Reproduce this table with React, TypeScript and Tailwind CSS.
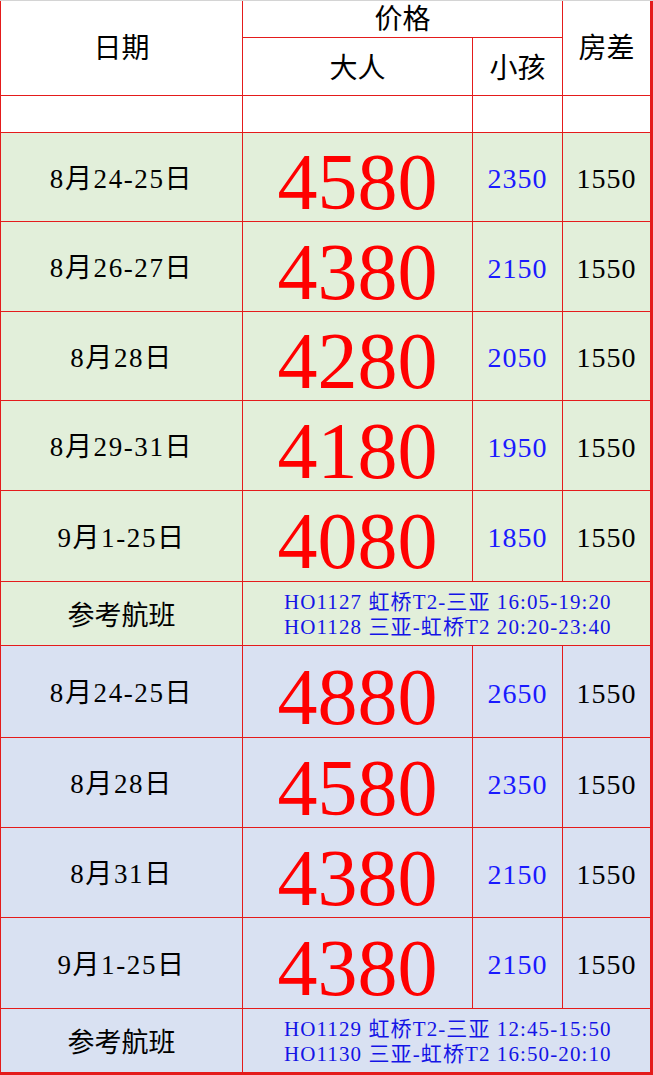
import React from "react";

const serif = { fontFamily: '"Liberation Serif", "Noto Sans CJK SC", serif' };

type Row = { date: string; adult: string; child: string; room: string; h: number };

const green: Row[] = [
  { date: "8月24-25日", adult: "4580", child: "2350", room: "1550", h: 88 },
  { date: "8月26-27日", adult: "4380", child: "2150", room: "1550", h: 89 },
  { date: "8月28日", adult: "4280", child: "2050", room: "1550", h: 88 },
  { date: "8月29-31日", adult: "4180", child: "1950", room: "1550", h: 89 },
  { date: "9月1-25日", adult: "4080", child: "1850", room: "1550", h: 90 },
];

const blue: Row[] = [
  { date: "8月24-25日", adult: "4880", child: "2650", room: "1550", h: 91 },
  { date: "8月28日", adult: "4580", child: "2350", room: "1550", h: 89 },
  { date: "8月31日", adult: "4380", child: "2150", room: "1550", h: 89 },
  { date: "9月1-25日", adult: "4380", child: "2150", room: "1550", h: 90 },
];

function DataRows({ rows, bg }: { rows: Row[]; bg: string }) {
  return (
    <>
      {rows.map((r, i) => (
        <React.Fragment key={i}>
          <div className={`${bg} flex items-center justify-center text-[27px] tracking-[1.6px] text-black pt-[4px]`}>{r.date}</div>
          <div className={`${bg} flex items-center justify-center text-[80px] leading-none text-[#ff0000] pt-[10px]`}>{r.adult}</div>
          <div className={`${bg} flex items-center justify-center text-[28px] tracking-[1px] text-[#1a1aff] pt-[4px]`}>{r.child}</div>
          <div className={`${bg} flex items-center justify-center text-[28px] tracking-[1px] text-black pt-[4px]`}>{r.room}</div>
        </React.Fragment>
      ))}
    </>
  );
}

function Flight({ bg, l1, l2 }: { bg: string; l1: string; l2: string }) {
  return (
    <>
      <div className={`${bg} flex items-center justify-center text-[27px] text-black pt-[6px]`}>参考航班</div>
      <div className={`${bg} col-span-3 flex flex-col justify-center pl-[41px] text-[21px] leading-[25px] tracking-[1.1px] text-[#1414e6] pt-[3px]`}>
        <div className="whitespace-pre">{l1}</div>
        <div className="whitespace-pre">{l2}</div>
      </div>
    </>
  );
}

export default function App() {
  return (
    <div className="w-[653px] h-[1075px] bg-white" style={serif}>
      <div
        className="grid w-[653px] bg-[#e41b1b] gap-px pl-px pr-[3px] pb-[3px] border-t border-[#d4d4d4]"
        style={{
          gridTemplateColumns: "241px 229px 89px 87px",
          gridTemplateRows:
            "36px 57px 36px 88px 89px 88px 89px 90px 63px 91px 89px 89px 90px 63px",
        }}
      >
        <div className="row-span-2 bg-white flex items-center justify-center text-[28px] text-black pt-[2px]">日期</div>
        <div className="col-span-2 bg-white flex items-center justify-center text-[28px] text-black pt-[2px]">价格</div>
        <div className="row-span-2 bg-white flex items-center justify-center text-[28px] text-black pt-[2px]">房差</div>
        <div className="bg-white flex items-center justify-center text-[28px] text-black pt-[4px]">大人</div>
        <div className="bg-white flex items-center justify-center text-[28px] text-black pt-[4px]">小孩</div>

        <div className="bg-white" />
        <div className="bg-white" />
        <div className="bg-white" />
        <div className="bg-white" />

        <DataRows rows={green} bg="bg-[#e2efda]" />
        <Flight bg="bg-[#e2efda]" l1="HO1127 虹桥T2-三亚 16:05-19:20" l2="HO1128 三亚-虹桥T2 20:20-23:40" />
        <DataRows rows={blue} bg="bg-[#d9e1f2]" />
        <Flight bg="bg-[#d9e1f2]" l1="HO1129 虹桥T2-三亚 12:45-15:50" l2="HO1130 三亚-虹桥T2 16:50-20:10" />
      </div>
    </div>
  );
}
